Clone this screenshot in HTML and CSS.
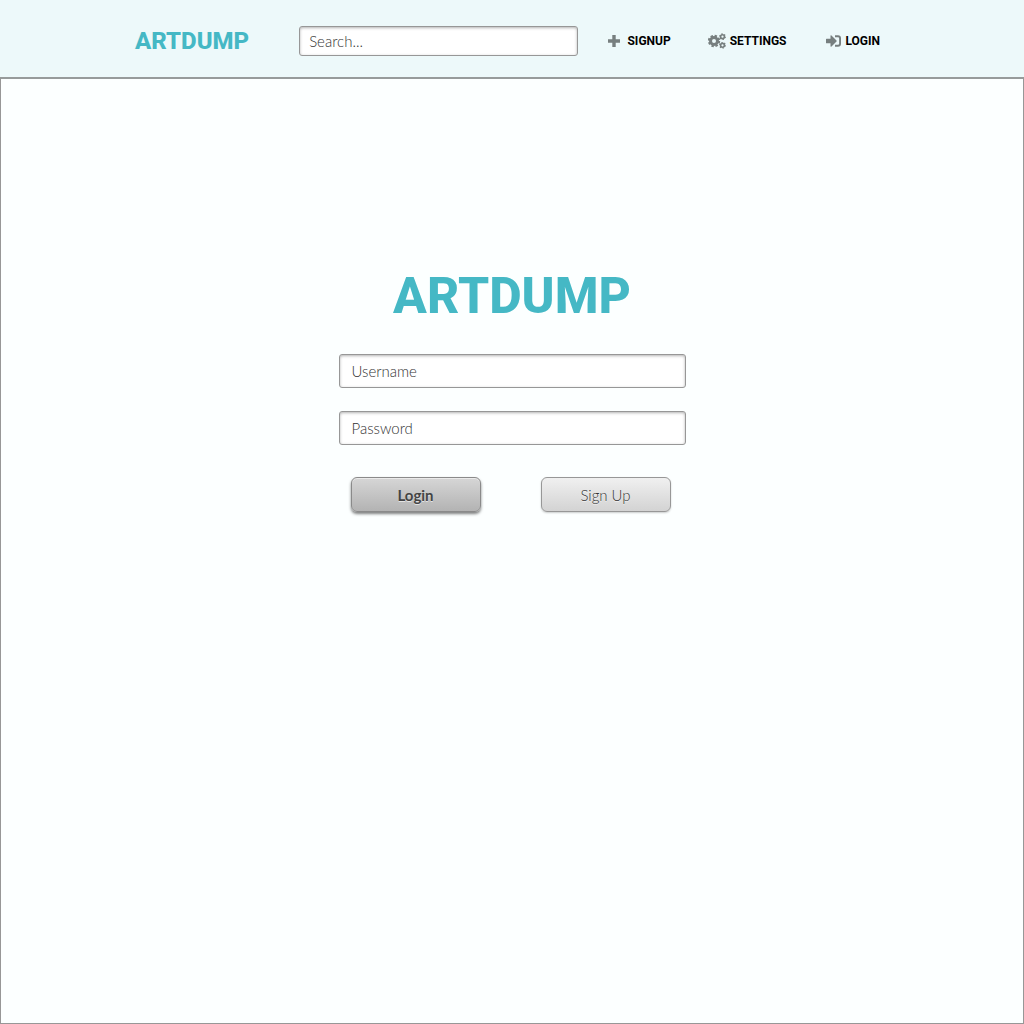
FILE: index.html
```html
<!DOCTYPE html>
<html lang="en">
<head>
<meta charset="utf-8">
<meta name="viewport" content="width=device-width, initial-scale=1">
<title>Artdump – Login</title>
<link rel="stylesheet" href="styles.css">
</head>
<body>
<header class="topbar">
  <a class="logo" href="#">ARTDUMP</a>
  <form class="search" role="search">
    <input class="field field-search" type="search" placeholder="Search..." aria-label="Search">
  </form>
  <nav class="nav">
    <a class="nav-link" href="#">
      <svg class="icon" viewBox="0 0 18 16" aria-hidden="true"><path d="M7.3 2h3.4v4.3H15v3.4h-4.3V14H7.300V9.700H3V6.300h4.300z"/></svg>
      SIGNUP
    </a>
    <a class="nav-link" href="#">
      <svg class="icon" viewBox="0 0 18 16" aria-hidden="true">
        <g class="gear">
          <circle cx="6" cy="8" r="3.500" stroke-width="3"/>
          <circle cx="6" cy="8" r="5.200" stroke-width="2" stroke-dasharray="2.400 1.684"/>
          <circle cx="14.500" cy="3.700" r="1.900" stroke-width="1.600"/>
          <circle cx="14.500" cy="3.700" r="2.800" stroke-width="1.200" stroke-dasharray="1.300 1.632"/>
          <circle cx="14.500" cy="12.300" r="1.900" stroke-width="1.600"/>
          <circle cx="14.500" cy="12.300" r="2.800" stroke-width="1.200" stroke-dasharray="1.300 1.632"/>
        </g>
      </svg>
      SETTINGS
    </a>
    <a class="nav-link" href="#">
      <svg class="icon" viewBox="0 0 18 16" aria-hidden="true"><path d="M3.500 5.700h4V3q0-1.200 1-.4l5 4.800q.5.600 0 1.200l-5 4.800q-1 .8-1-.4v-2.700h-4q-.5 0-.5-.5V6.200q0-.5.500-.5zM12 2.300h3q3 0 3 3v5.400q0 3-3 3h-3v-1.900h3q1.100 0 1.100-1.100V5.300q0-1.100-1.100-1.100h-3z"/></svg>
      LOGIN
    </a>
  </nav>
</header>
<main class="page">
  <form class="login">
    <h1 class="title">ARTDUMP</h1>
    <input class="field" type="text" placeholder="Username" aria-label="Username">
    <input class="field" type="password" placeholder="Password" aria-label="Password">
    <div class="actions">
      <button class="button button-primary" type="submit">Login</button>
      <button class="button" type="button">Sign Up</button>
    </div>
  </form>
</main>
</body>
</html>
```
FILE: styles.css
```css
* {
  box-sizing: border-box;
}

body {
  margin: 0;
  min-height: 100vh;
  display: flex;
  flex-direction: column;
  background: #fcffff;
  font-family: Lato, "Open Sans", sans-serif;
}

.topbar {
  display: flex;
  align-items: center;
  height: 77px;
  padding: 5px 144px 0 135px;
  background: #edf9fa;
}

.logo,
.title {
  color: #45b8c5;
  font-family: Roboto, sans-serif;
  font-weight: 800;
}

.logo {
  font-size: 24px;
  line-height: 28px;
  text-decoration: none;
}

.search {
  flex: 1;
  margin: 0 27px 0 50px;
}

.field {
  display: block;
  width: 100%;
  height: 34px;
  margin: 0 0 23px;
  padding: 0 12px;
  border: 1px solid #979797;
  border-radius: 3px;
  background: #fff;
  box-shadow: inset 0 1px 3px rgba(0, 0, 0, 0.3);
  color: #333;
  font-family: inherit;
  font-size: 15px;
  font-weight: 300;
  outline: none;
  appearance: none;
}

.field::placeholder {
  color: #333;
  opacity: 1;
}

.field-search {
  height: 30px;
  margin: 0;
  padding: 0 9px;
}

.nav {
  display: flex;
  gap: 37px;
}

.nav-link {
  display: flex;
  align-items: center;
  gap: 4px;
  color: #000;
  font: 700 12px/16px Roboto, sans-serif;
  text-decoration: none;
}

.icon {
  width: 18px;
  height: 16px;
  fill: #777f7f;
}

.gear {
  fill: none;
  stroke: #777f7f;
}

.page {
  flex: 1;
  padding: 188px 16px 32px;
  border: 1px solid #979797;
  border-top: 2px solid #979b9b;
}

.login {
  max-width: 347px;
  margin: 0 auto;
}

.title {
  margin: 0 0 29px;
  font-size: 50px;
  line-height: 58px;
  text-align: center;
}

.actions {
  display: flex;
  justify-content: space-between;
  padding: 9px 15px 0 12px;
}

.button {
  width: 130px;
  height: 35px;
  padding: 0;
  border: 1px solid #979797;
  border-radius: 6px;
  background: linear-gradient(#f0f0f0, #d3d3d3);
  box-shadow: 0 1px 2px rgba(0, 0, 0, 0.2);
  color: #333;
  font-family: inherit;
  font-size: 15px;
  font-weight: 300;
  text-shadow: 0 1px 0 rgba(255, 255, 255, 0.6);
}

.button-primary {
  border-color: #8a8a8a;
  background: linear-gradient(#d6d6d6, #b3b3b3);
  box-shadow: inset 0 1px 0 rgba(255, 255, 255, 0.5), 0 2px 3px rgba(0, 0, 0, 0.5);
  color: #444;
  font-weight: 700;
}
```
